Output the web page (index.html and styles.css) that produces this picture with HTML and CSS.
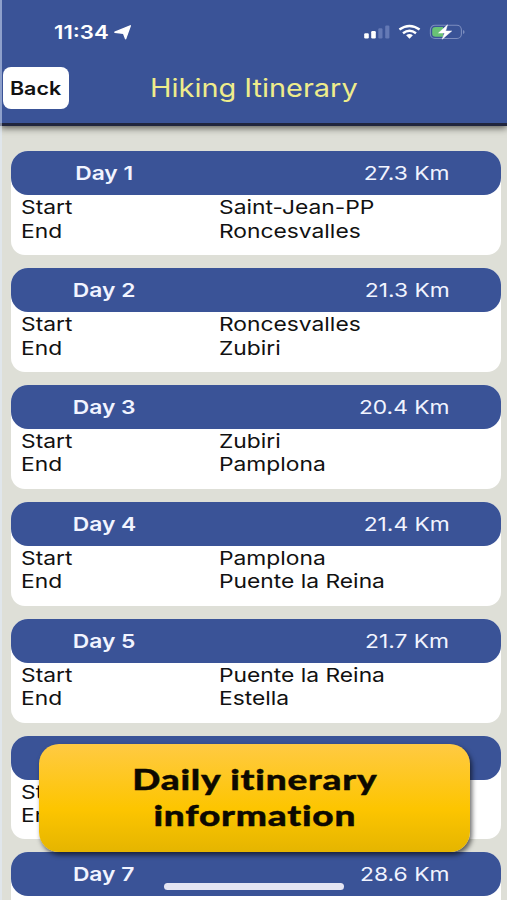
FILE: index.html
```html
<!DOCTYPE html>
<html lang="en">
<head>
  <meta charset="UTF-8">
  <title>Hiking Itinerary</title>
  <link rel="stylesheet" href="styles.css">
</head>
<body>

<div class="app">
  <header class="header">
    <div class="status">
      <div class="clock">
        <span class="wide">11:34</span>
        <svg class="arrow" width="18" height="15" viewBox="0 0 18 15"><path d="M16.300 .8 11.600 13.700 9.600 8.400 .9 7.200Z" fill="#fff" stroke="#fff" stroke-width="1.400" stroke-linejoin="round"/></svg>
      </div>
      <svg width="102" height="18" viewBox="0 0 102 18">
        <rect x=".2" y="10.300" width="4.600" height="5.200" rx="1.200" fill="#fff"/>
        <rect x="7.200" y="8" width="4.600" height="7.500" rx="1.200" fill="#fff"/>
        <rect x="14.300" y="5.300" width="4.200" height="10.200" rx="1.200" fill="#6479b5"/>
        <rect x="21.200" y="2.500" width="4.200" height="13" rx="1.200" fill="#6479b5"/>
        <g fill="none" stroke="#fff" stroke-width="2.400">
          <path d="M35.400 6.600Q45.500-.5 55.600 6.600"/>
          <path d="M39 10.200Q45.500 5.200 52 10.200"/>
        </g>
        <path d="M42.100 12.300Q45.500 9.800 48.900 12.300L45.500 15.700Z" fill="#fff"/>
        <rect x="66.400" y="2.300" width="31" height="13.200" rx="4.500" fill="none" stroke="#7c8dbe" stroke-width="1.100"/>
        <path d="M99 7v4q1.600-.5 1.600-2t-1.600-2z" fill="#7c8dbe"/>
        <path d="M71.500 4H79v9.800h-7.500q-3.300 0-3.300-3V7q0-3 3.300-3Z" fill="#69c375"/>
        <path d="M83.500 1.800 74.500 10h6l-2.300 6.200L87.700 8h-6Z" fill="#fff" stroke="#fff" stroke-width=".5"/>
      </svg>
    </div>
    <div class="nav">
      <button class="back"><span class="wide">Back</span></button>
      <h1><span class="wide">Hiking Itinerary</span></h1>
    </div>
  </header>

  <main class="days">
    <section class="card">
      <div class="top"><b><span class="wide">Day 1</span></b><span class="wide km">27.3 Km</span></div>
      <div class="row"><span class="wide">Start</span><span class="wide">Saint-Jean-PP</span></div>
      <div class="row"><span class="wide">End</span><span class="wide">Roncesvalles</span></div>
    </section>
    <section class="card">
      <div class="top"><b><span class="wide">Day 2</span></b><span class="wide km">21.3 Km</span></div>
      <div class="row"><span class="wide">Start</span><span class="wide">Roncesvalles</span></div>
      <div class="row"><span class="wide">End</span><span class="wide">Zubiri</span></div>
    </section>
    <section class="card">
      <div class="top"><b><span class="wide">Day 3</span></b><span class="wide km">20.4 Km</span></div>
      <div class="row"><span class="wide">Start</span><span class="wide">Zubiri</span></div>
      <div class="row"><span class="wide">End</span><span class="wide">Pamplona</span></div>
    </section>
    <section class="card">
      <div class="top"><b><span class="wide">Day 4</span></b><span class="wide km">21.4 Km</span></div>
      <div class="row"><span class="wide">Start</span><span class="wide">Pamplona</span></div>
      <div class="row"><span class="wide">End</span><span class="wide">Puente la Reina</span></div>
    </section>
    <section class="card">
      <div class="top"><b><span class="wide">Day 5</span></b><span class="wide km">21.7 Km</span></div>
      <div class="row"><span class="wide">Start</span><span class="wide">Puente la Reina</span></div>
      <div class="row"><span class="wide">End</span><span class="wide">Estella</span></div>
    </section>
    <section class="card">
      <div class="top"></div>
      <div class="row"><span class="wide">Start</span></div>
      <div class="row"><span class="wide">End</span></div>
    </section>
    <section class="card">
      <div class="top"><b><span class="wide">Day 7</span></b><span class="wide km">28.6 Km</span></div>
    </section>
  </main>

  <div class="banner">
    <span class="wide">Daily itinerary</span>
    <span class="wide">information</span>
  </div>
  <div class="home-bar"></div>
</div>

</body>
</html>
```

FILE: styles.css
```css
* {
  box-sizing: border-box;
}
body {
  margin: 0;
  font-family: Inter, "Liberation Sans", sans-serif;
  font-size: 19px;
  color: #111;
  background-color: #dedfd7;
}
.app {
  position: relative;
  height: 900px;
  overflow: hidden;
}
/* light edge down the left side */
.app::before {
  content: "";
  position: absolute;
  z-index: 2;
  left: 0;
  top: 0;
  width: 2px;
  height: 100%;
  background-color: rgba(225, 238, 255, 0.5);
}
.wide {
  display: inline-block;
  white-space: nowrap;
  transform: scaleX(1.2);
  transform-origin: left center;
}

.header {
  height: 126px;
  background-color: #3a5397;
  border-bottom: 3px solid #20253d;
  box-shadow: 0 2px 7px rgba(40, 40, 35, 0.75);
}
.status {
  display: flex;
  justify-content: space-between;
  align-items: center;
  height: 64px;
  padding: 0 41px 0 54px;
  color: #fff;
}
.clock {
  display: flex;
  align-items: center;
  font-size: 18.5px;
  font-weight: 600;
}
.clock .wide {
  width: 60px;
}
.nav {
  display: flex;
  align-items: center;
  height: 48px;
  padding-left: 3px;
}
.back {
  width: 66px;
  height: 42px;
  padding: 0 0 0 7px;
  border: none;
  border-radius: 8px;
  background-color: #fff;
  color: #111;
  font-family: inherit;
  font-size: 18px;
  font-weight: 600;
  text-align: left;
}
.back .wide {
  transform: scaleX(1.19);
}
h1 {
  margin: 0 0 0 81px;
  color: #eeec8b;
  font-size: 25px;
  font-weight: 400;
}
h1 .wide {
  transform: scaleX(1.157);
}

.days {
  display: flex;
  flex-direction: column;
  gap: 13px;
  padding: 25.3px 6px 0 10.5px;
}
.card {
  flex: none;
  height: 103.85px;
  border-radius: 17px 17px 14px 14px;
  background-color: #fff;
}
.top {
  display: flex;
  justify-content: space-between;
  align-items: center;
  height: 44px;
  padding: 1px 51.5px 0 0;
  border-radius: 17px;
  background-color: #3a5397;
  color: #f1f4ff;
}
.top b {
  width: 187px;
  text-align: center;
  font-weight: 600;
}
.top b .wide {
  transform-origin: center;
}
.km {
  transform-origin: right center;
}
.row {
  display: grid;
  grid-template-columns: 198px 1fr;
  padding-left: 10px;
  line-height: 23.4px;
}
.top + .row {
  padding-top: 1px;
}

.banner {
  position: absolute;
  left: 39px;
  top: 744px;
  width: 431px;
  height: 108px;
  display: flex;
  flex-direction: column;
  align-items: center;
  padding-top: 17px;
  border-radius: 20px;
  background: linear-gradient(#ffca43, #fdc500 60%, #e5b500);
  box-shadow: 2px 3px 5px rgba(0, 0, 0, 0.6);
  color: #0d0900;
  font-family: Lato, sans-serif;
  font-size: 28px;
  font-weight: 900;
  font-variant-ligatures: none;
  letter-spacing: 0.6px;
  line-height: 36px;
  -webkit-text-stroke: 0.4px #0d0900;
}
.banner .wide {
  transform: scaleX(1.32);
  transform-origin: center;
}
.home-bar {
  position: absolute;
  left: 164px;
  top: 883px;
  width: 180px;
  height: 7px;
  border-radius: 4px;
  background-color: #e4e5f3;
}
```
